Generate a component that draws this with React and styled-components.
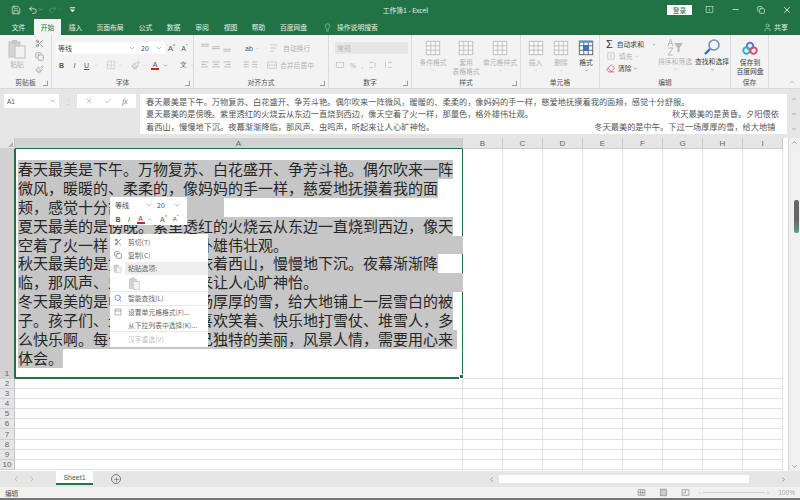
import React from 'react';
import styled, { createGlobalStyle } from 'styled-components';
import {
  Save, Undo2, Redo2, Scissors, Copy, Paintbrush, Lightbulb, User, X, Minus, Check,
  ChevronDown, ChevronUp, ChevronLeft, ChevronRight, Plus, Search, Eraser,
} from 'lucide-react';

const GlobalStyle = createGlobalStyle`
  html, body { margin: 0; padding: 0; background: #fff; }
  body { font-family: "Noto Sans CJK SC", "Liberation Sans", sans-serif; }
`;

const Window = styled.div`
  width: 800px;
  height: 500px;
  display: flex;
  flex-direction: column;
  overflow: hidden;
  background: #e6e6e6;
  border-bottom: 2px solid #777;
  box-sizing: border-box;
  font-size: 6.8px;
  color: #444;
`;

/* title bar */
const TitleBar = styled.div`
  height: 19px;
  flex: none;
  background: #217346;
  color: #e8f1ec;
  display: grid;
  grid-template-columns: 1fr auto 1fr;
  align-items: center;
  padding: 0 0 0 11px;
`;

const Qat = styled.div`
  display: flex;
  align-items: center;
  gap: 7px;
`;

const QatCaret = styled.span`
  display: flex;
  margin-left: -7px;
`;

const QatRedo = styled.span`
  display: flex;
  margin-left: -2px;
`;

const Title = styled.div`
  font-size: 6.8px;
  white-space: nowrap;
`;

const WinControls = styled.div`
  display: flex;
  align-items: center;
  justify-content: flex-end;
  gap: 17px;
  padding-right: 8px;
`;

const Login = styled.div`
  width: 25px;
  height: 10px;
  background: #fff;
  color: #217346;
  display: flex;
  align-items: center;
  justify-content: center;
  margin-right: -4px;
`;

/* tabs */
const TabBar = styled.div`
  height: 16px;
  flex: none;
  background: #217346;
  display: flex;
  align-items: stretch;
  padding-left: 3px;
  color: #e4efe9;
`;

const Tab = styled.div`
  width: ${(p) => p.$w}px;
  display: flex;
  align-items: center;
  justify-content: center;
  white-space: nowrap;
  background: ${(p) => (p.$active ? '#f3f3f3' : 'transparent')};
  color: ${(p) => (p.$active ? '#217346' : 'inherit')};
`;

const TellMe = styled.div`
  display: flex;
  align-items: center;
  gap: 5px;
  margin-left: 10px;
`;

const Share = styled.div`
  margin-left: auto;
  display: flex;
  align-items: center;
  gap: 2px;
  padding-right: 12px;
  font-size: 7px;
`;

/* ribbon */
const Ribbon = styled.div`
  height: 53px;
  flex: none;
  background: #f3f3f3;
  display: flex;
  border-bottom: 1px solid #d8d8d8;
  box-sizing: content-box;
`;

const Group = styled.div`
  width: ${(p) => p.$w}px;
  flex: none;
  box-sizing: border-box;
  border-right: 1px solid #dcdcdc;
  display: flex;
  flex-direction: column;
`;

const GroupBody = styled.div`
  flex: 1;
  display: flex;
  gap: ${(p) => p.$gap || 0}px;
  padding: ${(p) => p.$top ?? 6}px ${(p) => p.$pad ?? 4}px 0;
  min-height: 0;
`;

const GroupLabel = styled.div`
  height: 11px;
  flex: none;
  position: relative;
  text-align: center;
  line-height: 11px;
  color: #555;
  font-size: 6.8px;
`;

const Launcher = styled.span`
  position: absolute;
  right: 3px;
  bottom: 2px;
  width: 4px;
  height: 4px;
  border-right: 1px solid #999;
  border-bottom: 1px solid #999;
`;

const Collapse = styled.div`
  margin-left: auto;
  align-self: flex-end;
  display: flex;
  padding: 0 4px 2px 0;
  color: #777;
`;

const Stack = styled.div`
  display: flex;
  flex-direction: column;
  gap: ${(p) => p.$gap || 0}px;
  width: ${(p) => (p.$w ? `${p.$w}px` : 'auto')};
  flex: ${(p) => (p.$w ? 'none' : '1')};
  align-items: ${(p) => p.$align || 'stretch'};
`;

const Row = styled.div`
  display: flex;
  align-items: center;
  height: ${(p) => p.$h || 14}px;
  gap: ${(p) => p.$gap || 0}px;
  color: ${(p) => (p.$on ? '#444' : '#b4b4b4')};
  white-space: nowrap;
`;

const Combo = styled.div`
  width: ${(p) => p.$w}px;
  height: 12px;
  flex: none;
  box-sizing: border-box;
  background: ${(p) => (p.$off ? '#e6e6e6' : '#fff')};
  color: ${(p) => (p.$off ? '#b8b8b8' : '#444')};
  display: flex;
  align-items: center;
  justify-content: space-between;
  padding: 0 2px;
  font-size: 7px;
`;

const Bold = styled.span`
  width: ${(p) => p.$w || 12}px;
  flex: none;
  text-align: center;
  color: #555;
  font-family: "Liberation Sans", sans-serif;
  font-size: 7px;
  font-weight: ${(p) => (p.$b ? 700 : 400)};
  font-style: ${(p) => (p.$i ? 'italic' : 'normal')};
  text-decoration: ${(p) => (p.$u ? 'underline' : 'none')};
`;

const Grow = styled.span`
  width: ${(p) => p.$w || 13}px;
  flex: none;
  display: flex;
  align-items: flex-start;
  justify-content: center;
  color: #555;
  font-family: "Liberation Sans", sans-serif;
  font-size: ${(p) => p.$size}px;
  line-height: 9px;
`;

const Tick = styled.span`
  font-size: 5px;
  line-height: 5px;
`;

const FontColor = styled.span`
  width: ${(p) => p.$w || 12}px;
  flex: none;
  display: flex;
  flex-direction: column;
  align-items: center;
  font-family: "Liberation Sans", sans-serif;
  font-size: 7px;
  line-height: 7px;
  color: #555;
  &::after {
    content: '';
    width: 8px;
    height: 2px;
    background: #d0202a;
  }
`;

const BigButton = styled.div`
  width: ${(p) => p.$w}px;
  flex: none;
  display: flex;
  flex-direction: column;
  align-items: center;
  text-align: center;
  line-height: 9px;
  white-space: nowrap;
  gap: 1px;
  color: ${(p) => (p.$on ? '#444' : '#b4b4b4')};
`;

const Spacer = styled.div`
  width: ${(p) => p.$w}px;
  flex: none;
`;

/* formula bar */
const FormulaBar = styled.div`
  height: 49px;
  flex: none;
  background: #e6e6e6;
  display: flex;
  align-items: flex-start;
  padding: 5px 0 0 4px;
  box-sizing: border-box;
`;

const NameBox = styled.div`
  width: 55px;
  height: 14px;
  background: #fff;
  flex: none;
  display: flex;
  align-items: center;
  justify-content: space-between;
  padding: 0 3px;
  box-sizing: border-box;
  color: #555;
  font-family: "Liberation Sans", sans-serif;
  font-size: 6.5px;
`;

const Dots = styled.div`
  width: 18px;
  height: 14px;
  flex: none;
  display: flex;
  align-items: center;
  justify-content: center;
  color: #bbb;
`;

const FnButtons = styled.div`
  width: 59px;
  height: 14px;
  flex: none;
  background: #fff;
  display: flex;
  align-items: center;
  justify-content: space-around;
  padding: 0 3px;
  box-sizing: border-box;
  color: #777;
`;

const Fx = styled.i`
  font-family: "Liberation Serif", serif;
  font-size: 7.5px;
`;

const FormulaText = styled.div`
  width: 647px;
  height: 40px;
  margin-left: 4px;
  flex: none;
  background: #fff;
  box-sizing: border-box;
  padding: 1px 0 0 6px;
  color: #555;
  font-size: 8.24px;
  line-height: 12.4px;
  white-space: nowrap;
  overflow: hidden;
`;

const FormulaLine = styled.div`
  display: flex;
`;

const FormulaTail = styled.span`
  margin-left: ${(p) => p.$gap}px;
`;

const FormulaScroll = styled.div`
  flex: 1;
  height: 40px;
  display: flex;
  flex-direction: column;
  align-items: center;
  justify-content: space-between;
  padding: 2px 0;
  box-sizing: border-box;
  color: #777;
`;

/* sheet */
const Main = styled.div`
  flex: 1;
  min-height: 0;
  display: flex;
  background: #fff;
  overflow: hidden;
`;

const Sheet = styled.div`
  width: 783px;
  flex: none;
  position: relative;
  display: flex;
  flex-direction: column;
`;

const Line = styled.div`
  display: flex;
  height: ${(p) => p.$h}px;
  flex: none;
`;

const RowHead = styled.div`
  width: 15px;
  flex: none;
  box-sizing: border-box;
  background: ${(p) => (p.$sel ? '#d2d2d2' : '#e6e6e6')};
  border-right: 1px solid ${(p) => (p.$sel ? '#217346' : '#c6c6c6')};
  border-bottom: 1px solid #cfcfcf;
  display: flex;
  align-items: flex-end;
  justify-content: center;
  font-family: "Liberation Sans", sans-serif;
  font-size: 8px;
  line-height: 9px;
  color: #666;
  overflow: hidden;
`;

const Corner = styled(RowHead)`
  position: relative;
  &::after {
    content: '';
    position: absolute;
    right: 1px;
    bottom: 1px;
    border-style: solid;
    border-width: 0 0 5px 5px;
    border-color: transparent transparent #b5b5b5 transparent;
  }
`;

const ColHead = styled.div`
  width: ${(p) => p.$w}px;
  flex: none;
  box-sizing: border-box;
  background: ${(p) => (p.$sel ? '#d2d2d2' : '#e6e6e6')};
  border-right: 1px solid #c6c6c6;
  border-bottom: 1px solid ${(p) => (p.$sel ? '#217346' : '#cfcfcf')};
  display: flex;
  align-items: center;
  justify-content: center;
  font-family: "Liberation Sans", sans-serif;
  font-size: 8px;
  color: #666;
`;

const Cell = styled.div`
  width: ${(p) => p.$w}px;
  flex: none;
  box-sizing: border-box;
  border-right: 1px solid #e2e2e2;
  border-bottom: 1px solid #e2e2e2;
`;

const ActiveCell = styled.div`
  width: 448px;
  flex: none;
  position: relative;
  box-sizing: border-box;
  border: 1px solid #217346;
  border-top: 0;
  border-bottom-width: 2px;
  padding: 11px 0 0 2px;
  color: #262626;
  font-size: 15px;
  line-height: 18.9px;
  white-space: nowrap;
  &::after {
    content: '';
    position: absolute;
    right: -2px;
    bottom: -2px;
    width: 3px;
    height: 3px;
    background: #217346;
    border: 1px solid #fff;
  }
`;

const Selected = styled.div`
  width: ${(p) => p.$w}px;
  height: 18.9px;
  background: #c6c6c6;
`;

const VScroll = styled.div`
  flex: 1;
  margin-left: 5px;
  background: #f0f0f0;
  border-left: 1px solid #d4d4d4;
  display: flex;
  flex-direction: column;
  align-items: center;
  justify-content: space-between;
  padding: 1px 0;
  position: relative;
  color: #666;
`;

const VThumb = styled.div`
  position: absolute;
  top: 62px;
  right: 1px;
  width: 5px;
  height: 33px;
  border-radius: 2px;
  background: linear-gradient(#666, #666 60%, #5fa07c);
`;

/* floating mini toolbar and context menu */
const MiniBar = styled.div`
  position: absolute;
  left: 110px;
  top: 59px;
  width: 77px;
  height: 28px;
  background: #fff;
  padding: 1px 3px;
  box-sizing: border-box;
`;

const Menu = styled.div`
  position: absolute;
  left: 110px;
  top: 96px;
  width: 98px;
  height: 113px;
  background: #fff;
  box-sizing: border-box;
  padding: 1px 0;
  display: flex;
  flex-direction: column;
  color: #666;
`;

const MenuItem = styled.div`
  height: 13.4px;
  flex: none;
  box-sizing: border-box;
  display: flex;
  align-items: center;
  white-space: nowrap;
  color: ${(p) => (p.$off ? '#c0c0c0' : 'inherit')};
  border-bottom: ${(p) => (p.$sep ? '1px solid #e8e8e8' : '0')};
`;

const MenuIcon = styled.span`
  width: 15px;
  flex: none;
  display: flex;
  justify-content: center;
  align-items: center;
`;

const MenuLabel = styled.span`
  flex: 1;
  height: 100%;
  display: flex;
  align-items: center;
  padding-left: 3px;
  background: ${(p) => (p.$head ? '#eeeeee' : 'transparent')};
`;

const PasteRow = styled.div`
  height: 17px;
  flex: none;
  box-sizing: border-box;
  padding-left: 18px;
  display: flex;
  align-items: center;
  border-bottom: 1px solid #e8e8e8;
`;

/* bottom */
const SheetTabs = styled.div`
  height: 16px;
  flex: none;
  display: flex;
  align-items: center;
  background: #e6e6e6;
  padding-left: 12px;
  color: #aaa;
`;

const SheetTab = styled.div`
  width: 37px;
  height: 14px;
  margin: 0 18px 0 20px;
  align-self: flex-start;
  box-sizing: border-box;
  background: #fff;
  border-bottom: 2px solid #217346;
  color: #217346;
  font-family: "Liberation Sans", sans-serif;
  font-size: 7px;
  display: flex;
  align-items: center;
  justify-content: center;
`;

const AddSheet = styled.span`
  width: 8px;
  height: 8px;
  border: 1px solid #777;
  border-radius: 50%;
  color: #666;
  display: flex;
  align-items: center;
  justify-content: center;
`;

const HScroll = styled.div`
  margin-left: auto;
  width: 302px;
  height: 8px;
  display: flex;
  align-items: center;
  color: #666;
  margin-right: 10px;
`;

const HThumb = styled.div`
  width: 250px;
  height: 8px;
  margin-left: 4px;
  background: #fff;
`;

const StatusBar = styled.div`
  height: 11px;
  flex: none;
  background: #f1f1f1;
  display: flex;
  align-items: center;
  padding: 0 5px;
  color: #555;
  font-size: 6.6px;
`;

const StatusViews = styled.div`
  margin-left: auto;
  display: flex;
  align-items: center;
  gap: 13px;
  color: #777;
`;

const ZoomSlider = styled.div`
  width: 72px;
  flex: none;
  display: flex;
  align-items: center;
  gap: 1px;
  margin: 0 -5px;
  color: #aaa;
`;

const ZoomTrack = styled.div`
  flex: 1;
  height: 1px;
  background: #cfcfcf;
`;

const ZoomText = styled.span`
  color: #aaa;
  font-family: "Liberation Sans", sans-serif;
`;

const SigmaGlyph = styled.span`
  width: 12px;
  font-size: 11px;
  line-height: 10px;
  font-family: "Liberation Sans", sans-serif;
  color: #333;
`;

const Grid = ({ s = 10, c = 'currentColor', children }) => (
  <svg width={s} height={s} viewBox="0 0 16 16" fill="none" stroke={c} strokeWidth="1">{children}</svg>
);

const AlignIcon = ({ rows }) => (
  <Grid s={10}>
    {rows.map(([x1, x2, y]) => <path key={y} d={`M${x1} ${y}H${x2}`} strokeWidth="1.4" />)}
  </Grid>
);

const SheetIcon = ({ s = 18, accent }) => (
  <svg width={s} height={s} viewBox="0 0 24 24" fill="none" stroke="currentColor" strokeWidth="1">
    <rect x="3" y="3" width="18" height="18" fill="#f7f7f7" />
    <path d="M3 9H21M3 15H21M9 3V21M15 3V21" />
    {accent && <rect x="3" y="2" width="18" height="3" fill="#5b93c9" stroke="none" />}
    {accent && <rect x="8" y="8" width="8" height="8" fill={accent} stroke="none" />}
  </svg>
);

const PasteIcon = ({ s = 20 }) => (
  <svg width={s} height={s} viewBox="0 0 20 20" fill="none">
    <rect x="2" y="3" width="11" height="15" fill="#d4d4d4" stroke="#c0c0c0" />
    <rect x="5" y="1" width="5" height="4" fill="#c8c8c8" />
    <rect x="8" y="7" width="10" height="12" fill="#f2f2f2" stroke="#c0c0c0" />
  </svg>
);

const BaiduLogo = () => (
  <svg width="16" height="14" viewBox="0 0 16 14" fill="none" strokeWidth="2">
    <circle cx="8" cy="5" r="3.2" stroke="#4f7fd6" />
    <circle cx="4.5" cy="9.5" r="3.2" stroke="#2fb5c4" />
    <circle cx="11.5" cy="9.5" r="3.2" stroke="#d9506a" />
  </svg>
);

const FindIcon = () => (
  <svg width="18" height="18" viewBox="0 0 18 18" fill="none">
    <circle cx="11" cy="7" r="5" stroke="#6d8fb8" strokeWidth="1.5" />
    <path d="M7 11L2 16" stroke="#2f6fb5" strokeWidth="2.4" />
  </svg>
);

const SortIcon = () => (
  <svg width="18" height="18" viewBox="0 0 18 18" fill="none">
    <path d="M2 8L4.5 1L7 8M3 5.5H6M2 10H7L2 17H7" stroke="#bbb" />
    <path d="M8 5H17L13.5 10V14H11.5V10Z" fill="#bbb" />
  </svg>
);

const Customize = () => (
  <svg width="7" height="7" viewBox="0 0 8 8" fill="currentColor">
    <path d="M1 1.5H7V2.5H1ZM1 4H7L4 7Z" />
  </svg>
);

const tabs = [
  ['文件', 31, false], ['开始', 27, true], ['插入', 29, false], ['页面布局', 40, false],
  ['公式', 31, false], ['数据', 25, false], ['审阅', 32, false], ['视图', 25, false],
  ['帮助', 31, false], ['百度网盘', 39, false],
];

const lines = [
  ['春天最美是下午。万物复苏、白花盛开、争芳斗艳。偶尔吹来一阵', 435],
  ['微风，暖暖的、柔柔的，像妈妈的手一样，慈爱地抚摸着我的面', 420],
  ['颊，感觉十分舒服。', 206],
  ['夏天最美的是傍晚。紫里透红的火烧云从东边一直烧到西边，像天', 435],
  ['空着了火一样，那量色，格外雄伟壮观。', 445],
  ['秋天最美的是黄昏。夕阳偎依着西山，慢慢地下沉。夜幕渐渐降', 420],
  ['临，那风声、虫鸣声，听起来让人心旷神怡。', 445],
  ['冬天最美的是中午。下过一场厚厚的雪，给大地铺上一层雪白的被', 435],
  ['子。孩子们、最是开心的，喜欢笑着、快乐地打雪仗、堆雪人，多', 435],
  ['么快乐啊。每个季节都有自己独特的美丽，风景人情，需要用心来', 439],
  ['体会。', 45],
];

const columns = ['B', 'C', 'D', 'E', 'F', 'G', 'H', 'I'];
const rows = [2, 3, 4, 5, 6, 7, 8, 9, 10];

const icon = { size: 8, strokeWidth: 1.4 };

export default function App() {
  return (
    <>
      <GlobalStyle />
      <Window>
        <TitleBar>
          <Qat>
            <Save size={10} strokeWidth={1.6} />
            <Undo2 size={10} strokeWidth={1.8} />
            <QatCaret><ChevronDown size={5} /></QatCaret>
            <QatRedo><Redo2 size={9} strokeWidth={1.4} color="#6f9f84" /></QatRedo>
            <QatCaret><ChevronDown size={5} color="#6f9f84" /></QatCaret>
            <Customize />
          </Qat>
          <Title>工作簿1 - Excel</Title>
          <WinControls>
            <Login>登录</Login>
            <Grid s={9}><rect x="2" y="3" width="12" height="10" /><path d="M8 6V11" /></Grid>
            <Minus size={9} />
            <Copy size={8} />
            <X size={10} />
          </WinControls>
        </TitleBar>

        <TabBar>
          {tabs.map(([name, w, active]) => <Tab key={name} $w={w} $active={active}>{name}</Tab>)}
          <TellMe><Lightbulb size={9} strokeWidth={1.2} />操作说明搜索</TellMe>
          <Share><User size={9} strokeWidth={1.3} />共享</Share>
        </TabBar>

        <Ribbon>
          <Group $w={52}>
            <GroupBody $pad={7} $gap={5} $top={4}>
              <BigButton $w={20}>
                <PasteIcon />
                粘贴
              </BigButton>
              <Stack $w={14} $gap={4} $align="center">
                <Scissors size={9} color="#888" />
                <Copy size={9} color="#999" />
                <Paintbrush size={9} color="#aaa" />
              </Stack>
            </GroupBody>
            <GroupLabel>剪贴板<Launcher /></GroupLabel>
          </Group>

          <Group $w={142}>
            <GroupBody $pad={4}>
              <Stack $gap={3}>
                <Row $on>
                  <Combo $w={82}>等线<ChevronDown size={8} strokeWidth={1} /></Combo>
                  <Spacer $w={1} />
                  <Combo $w={26}>20<ChevronDown size={8} strokeWidth={1} /></Combo>
                  <Grow $size={8}>A<Tick>^</Tick></Grow>
                  <Grow $size={7}>A<Tick>ˇ</Tick></Grow>
                </Row>
                <Row $gap={2}>
                  <Bold $w={11} $b>B</Bold>
                  <Bold $w={11} $i>I</Bold>
                  <Bold $w={9} $u>U</Bold>
                  <ChevronDown size={5} />
                  <Spacer $w={4} />
                  <Grid s={10}><path d="M2 2H14V14H2ZM8 2V14M2 8H14" strokeDasharray="2 1" /></Grid>
                  <ChevronDown size={5} />
                  <Spacer $w={4} />
                  <Paintbrush size={9} />
                  <ChevronDown size={5} />
                  <FontColor $w={12}>A</FontColor>
                  <ChevronDown size={5} color="#555" />
                  <Spacer $w={6} />
                  <Bold $w={10}>文</Bold>
                  <ChevronDown size={5} />
                </Row>
              </Stack>
            </GroupBody>
            <GroupLabel>字体<Launcher /></GroupLabel>
          </Group>

          <Group $w={135}>
            <GroupBody $pad={6}>
              <Stack $gap={3}>
                <Row $gap={1}>
                  <AlignIcon rows={[[2, 14, 2], [2, 14, 5]]} />
                  <AlignIcon rows={[[2, 14, 6], [2, 14, 9]]} />
                  <AlignIcon rows={[[2, 14, 10], [2, 14, 13]]} />
                  <Spacer $w={10} />
                  <Bold $w={10}>ab</Bold>
                  <ChevronDown size={5} />
                  <Spacer $w={7} />
                  <Grid s={10}><path d="M2 3H14M2 8H12M2 13H8" /></Grid>
                  <Spacer $w={2} />
                  自动换行
                </Row>
                <Row $gap={1}>
                  <AlignIcon rows={[[2, 13, 3], [2, 10, 7], [2, 13, 11]]} />
                  <AlignIcon rows={[[2, 14, 3], [4, 12, 7], [2, 14, 11]]} />
                  <AlignIcon rows={[[3, 14, 3], [6, 14, 7], [3, 14, 11]]} />
                  <Spacer $w={6} />
                  <AlignIcon rows={[[6, 14, 3], [6, 14, 7], [6, 14, 11]]} />
                  <AlignIcon rows={[[2, 10, 3], [2, 10, 7], [2, 10, 11]]} />
                  <Spacer $w={4} />
                  <Grid s={10}><path d="M1 3H15V13H1ZM1 8H15" /></Grid>
                  <Spacer $w={1} />
                  合并后居中
                </Row>
              </Stack>
            </GroupBody>
            <GroupLabel>对齐方式<Launcher /></GroupLabel>
          </Group>

          <Group $w={83}>
            <GroupBody $pad={6}>
              <Stack $gap={3}>
                <Row><Combo $w={73} $off>常规</Combo></Row>
                <Row $gap={5}>
                  <Grid s={10}><rect x="2" y="4" width="12" height="8" /></Grid>
                  <span>%</span>
                  <span>,</span>
                  <Grid s={10}><path d="M2 4H8M2 12H8M11 3V13" /></Grid>
                  <Grid s={10}><path d="M8 4H14M8 12H14M4 3V13" /></Grid>
                </Row>
              </Stack>
            </GroupBody>
            <GroupLabel>数字<Launcher /></GroupLabel>
          </Group>

          <Group $w={109}>
            <GroupBody $pad={4} $gap={1} $top={4}>
              <BigButton $w={34}><SheetIcon />条件格式<ChevronDown size={5} /></BigButton>
              <BigButton $w={30}><SheetIcon />套用<br />表格格式</BigButton>
              <BigButton $w={36}><SheetIcon />单元格样式<ChevronDown size={5} /></BigButton>
            </GroupBody>
            <GroupLabel>样式<Launcher /></GroupLabel>
          </Group>

          <Group $w={79}>
            <GroupBody $pad={3} $gap={2} $top={4}>
              <BigButton $w={23}><SheetIcon />插入<ChevronDown size={5} /></BigButton>
              <BigButton $w={24}><SheetIcon />删除<ChevronDown size={5} /></BigButton>
              <BigButton $w={22} $on>
                <SheetIcon accent="#3f74b5" />格式<ChevronDown size={5} />
              </BigButton>
            </GroupBody>
            <GroupLabel>单元格</GroupLabel>
          </Group>

          <Group $w={131}>
            <GroupBody $pad={6} $gap={1} $top={3}>
              <Stack $w={50}>
                <Row $h={12} $on $gap={1}><SigmaGlyph>Σ</SigmaGlyph>自动求和<Spacer $w={6} /><ChevronDown size={5} /></Row>
                <Row $h={12} $gap={1}><Grid s={10}><rect x="3" y="3" width="10" height="10" /><path d="M8 5V11" /></Grid><Spacer $w={1} />填充<ChevronDown size={5} /></Row>
                <Row $h={12} $on $gap={1}><Eraser size={9} color="#c2507a" /><Spacer $w={1} />清除<ChevronDown size={5} /></Row>
              </Stack>
              <BigButton $w={36}><SortIcon />排序和筛选<ChevronDown size={5} /></BigButton>
              <BigButton $w={36} $on><FindIcon />查找和选择<ChevronDown size={5} /></BigButton>
            </GroupBody>
            <GroupLabel>编辑</GroupLabel>
          </Group>

          <Group $w={38}>
            <GroupBody $pad={0} $top={6}>
              <Stack $align="center" $gap={3}>
                <BaiduLogo />
                <BigButton $w={38} $on>保存到<br />百度网盘</BigButton>
              </Stack>
            </GroupBody>
            <GroupLabel>保存</GroupLabel>
          </Group>

          <Collapse><ChevronUp size={8} strokeWidth={1.2} /></Collapse>
        </Ribbon>

        <FormulaBar>
          <NameBox>A1<ChevronDown size={6} /></NameBox>
          <Dots>⋮</Dots>
          <FnButtons>
            <X {...icon} />
            <Check {...icon} />
            <Fx>fx</Fx>
          </FnButtons>
          <FormulaText>
            <FormulaLine>春天最美是下午。万物复苏、白花盛开、争芳斗艳。偶尔吹来一阵微风，暖暖的、柔柔的，像妈妈的手一样，慈爱地抚摸着我的面颊，感觉十分舒服。</FormulaLine>
            <FormulaLine>
              夏天最美的是傍晚。紫里透红的火烧云从东边一直烧到西边，像天空着了火一样，那量色，格外雄伟壮观。
              <FormulaTail $gap={139}>秋天最美的是黄昏。夕阳偎依</FormulaTail>
            </FormulaLine>
            <FormulaLine>
              着西山，慢慢地下沉。夜幕渐渐降临，那风声、虫鸣声，听起来让人心旷神怡。
              <FormulaTail $gap={160}>冬天最美的是中午。下过一场厚厚的雪，给大地铺</FormulaTail>
            </FormulaLine>
          </FormulaText>
          <FormulaScroll>
            <ChevronUp size={6} />
            <Minus size={6} />
            <ChevronDown size={6} />
          </FormulaScroll>
        </FormulaBar>

        <Main>
          <Sheet>
            <Line $h={11}>
              <Corner />
              <ColHead $w={448} $sel>A</ColHead>
              {columns.map((c) => <ColHead key={c} $w={40}>{c}</ColHead>)}
            </Line>
            <Line $h={230}>
              <RowHead $sel>1</RowHead>
              <ActiveCell>
                {lines.map(([text, w]) => <Selected key={text} $w={w}>{text}</Selected>)}
              </ActiveCell>
              {columns.map((c) => <Cell key={c} $w={40} />)}
            </Line>
            {rows.map((r) => (
              <Line key={r} $h={10.1}>
                <RowHead>{r}</RowHead>
                <Cell $w={448} />
                {columns.map((c) => <Cell key={c} $w={40} />)}
              </Line>
            ))}

            <MiniBar>
              <Row $on>
                <Combo $w={42}>等线<ChevronDown size={8} strokeWidth={1} /></Combo>
                <Combo $w={28}>20<ChevronDown size={8} strokeWidth={1} /></Combo>
              </Row>
              <Row $gap={1}>
                <Bold $w={10} $b>B</Bold>
                <Bold $w={10} $i>I</Bold>
                <FontColor $w={11}>A</FontColor>
                <ChevronDown size={5} color="#555" />
                <Spacer $w={4} />
                <Grow $w={11} $size={7}>A<Tick>^</Tick></Grow>
                <Grow $w={11} $size={6}>A<Tick>ˇ</Tick></Grow>
              </Row>
            </MiniBar>

            <Menu>
              <MenuItem><MenuIcon><Scissors size={8} /></MenuIcon><MenuLabel>剪切(T)</MenuLabel></MenuItem>
              <MenuItem><MenuIcon><Copy size={8} /></MenuIcon><MenuLabel>复制(C)</MenuLabel></MenuItem>
              <MenuItem><MenuIcon><PasteIcon s={9} /></MenuIcon><MenuLabel $head>粘贴选项:</MenuLabel></MenuItem>
              <PasteRow><PasteIcon s={13} /></PasteRow>
              <MenuItem $sep><MenuIcon><Search size={8} color="#2f6fb5" /></MenuIcon><MenuLabel>智能查找(L)</MenuLabel></MenuItem>
              <MenuItem><MenuIcon><Grid s={8}><path d="M2 2H14V14H2ZM2 6H14" /></Grid></MenuIcon><MenuLabel>设置单元格格式(F)...</MenuLabel></MenuItem>
              <MenuItem $sep><MenuIcon /><MenuLabel>从下拉列表中选择(K)...</MenuLabel></MenuItem>
              <MenuItem $off><MenuIcon /><MenuLabel>汉字重选(V)</MenuLabel></MenuItem>
            </Menu>
          </Sheet>
          <VScroll>
            <ChevronUp size={7} />
            <VThumb />
            <ChevronDown size={7} />
          </VScroll>
        </Main>

        <SheetTabs>
          <ChevronLeft size={8} />
          <Spacer $w={8} />
          <ChevronRight size={8} />
          <SheetTab>Sheet1</SheetTab>
          <AddSheet><Plus size={7} /></AddSheet>
          <HScroll>
            <ChevronLeft size={7} />
            <HThumb />
            <Spacer $w={31} />
            <ChevronRight size={7} />
          </HScroll>
        </SheetTabs>

        <StatusBar>
          编辑
          <StatusViews>
            <Grid s={9}><path d="M2 3H14V13H2ZM2 8H14M6 3V13M10 3V13" /></Grid>
            <Grid s={9}><rect x="3" y="2" width="10" height="12" fill="#ccc" /></Grid>
            <Grid s={9}><path d="M2 3H14V13H2ZM8 3V9H2" /></Grid>
            <ZoomSlider>
              <Minus size={4} />
              <ZoomTrack />
              <Plus size={4} />
            </ZoomSlider>
            <ZoomText>100%</ZoomText>
          </StatusViews>
        </StatusBar>
      </Window>
    </>
  );
}
